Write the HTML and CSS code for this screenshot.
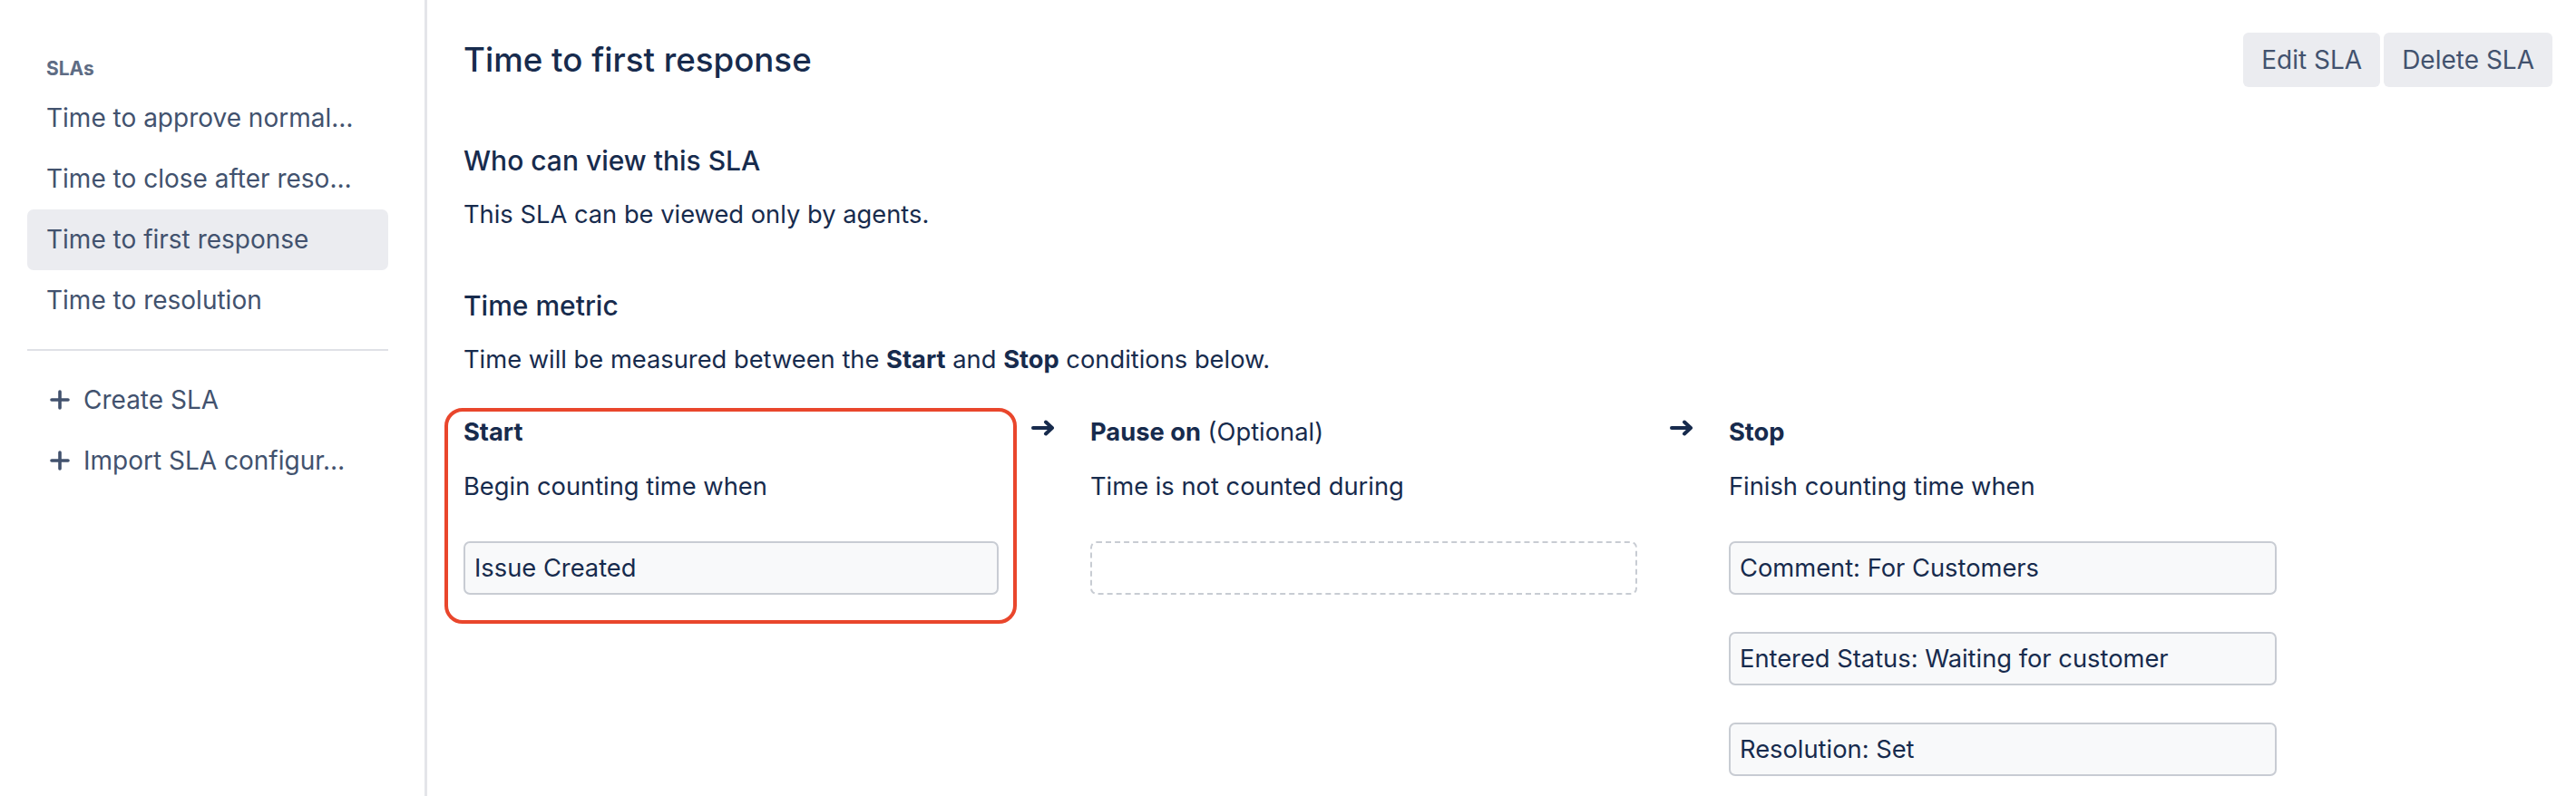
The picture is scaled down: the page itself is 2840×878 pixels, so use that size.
FILE: index.html
```html
<!DOCTYPE html>
<html lang="en">
<head>
<meta charset="utf-8">
<title>Time to first response</title>
<link rel="stylesheet" href="styles.css">
</head>
<body>
<div class="app">
  <aside class="sidebar">
    <div class="sidebar-heading">SLAs</div>
    <ul class="sla-list">
      <li class="sla-item">Time to approve normal…</li>
      <li class="sla-item">Time to close after reso…</li>
      <li class="sla-item is-selected">Time to first response</li>
      <li class="sla-item">Time to resolution</li>
    </ul>
    <div class="divider"></div>
    <ul class="action-list">
      <li class="action-item">
        <svg class="plus" width="24" height="24" viewBox="0 0 24 24" aria-hidden="true"><path d="M12 3v18M3 12h18"/></svg>
        <span>Create SLA</span>
      </li>
      <li class="action-item">
        <svg class="plus" width="24" height="24" viewBox="0 0 24 24" aria-hidden="true"><path d="M12 3v18M3 12h18"/></svg>
        <span>Import SLA configur…</span>
      </li>
    </ul>
  </aside>

  <main class="content">
    <header class="page-header">
      <h1 class="page-title">Time to first response</h1>
      <div class="btn-group">
        <button class="btn">Edit SLA</button>
        <button class="btn">Delete SLA</button>
      </div>
    </header>

    <section class="section section-first">
      <h2 class="section-title">Who can view this SLA</h2>
      <p class="section-text">This SLA can be viewed only by agents.</p>
    </section>

    <section class="section">
      <h2 class="section-title">Time metric</h2>
      <p class="section-text">Time will be measured between the <strong>Start</strong> and <strong>Stop</strong> conditions below.</p>

      <div class="metric-row">
        <div class="condition condition-start is-highlighted">
          <div class="condition-title"><strong>Start</strong></div>
          <div class="condition-desc">Begin counting time when</div>
          <div class="condition-boxes">
            <div class="cond-box">Issue Created</div>
          </div>
        </div>

        <svg class="arrow" width="26" height="18" viewBox="0 0 26 18" aria-hidden="true"><path d="M2 9H23M16 2.5L23 9L16 15.5"/></svg>

        <div class="condition condition-pause">
          <div class="condition-title"><strong>Pause on</strong> (Optional)</div>
          <div class="condition-desc">Time is not counted during</div>
          <div class="condition-boxes">
            <div class="cond-box cond-box-empty"></div>
          </div>
        </div>

        <svg class="arrow" width="26" height="18" viewBox="0 0 26 18" aria-hidden="true"><path d="M2 9H23M16 2.5L23 9L16 15.5"/></svg>

        <div class="condition condition-stop">
          <div class="condition-title"><strong>Stop</strong></div>
          <div class="condition-desc">Finish counting time when</div>
          <div class="condition-boxes">
            <div class="cond-box">Comment: For Customers</div>
            <div class="cond-box">Entered Status: Waiting for customer</div>
            <div class="cond-box">Resolution: Set</div>
          </div>
        </div>
      </div>
    </section>
  </main>
</div>
</body>
</html>
```

FILE: styles.css
```css
* {
  box-sizing: border-box;
}

html, body {
  margin: 0;
  padding: 0;
  background: #ffffff;
}

body {
  font-family: Inter, "Liberation Sans", sans-serif;
  color: #172b4d;
}

.app {
  display: flex;
  min-height: 100vh;
}

/* ---------- Sidebar ---------- */
.sidebar {
  width: 471px;
  flex: 0 0 471px;
  border-right: 3px solid #e4e5e9;
  padding: 64px 40px 0 30px;
}

.sidebar-heading {
  font-size: 21px;
  line-height: 24px;
  font-weight: 700;
  color: #5e6c84;
  padding-left: 21px;
}

.sla-list,
.action-list {
  list-style: none;
  margin: 0;
  padding: 0;
}

.sla-list {
  margin-top: 9px;
}

.sla-item {
  height: 67px;
  line-height: 67px;
  padding: 0 21px;
  font-size: 28px;
  color: #42526e;
  border-radius: 7px;
  white-space: nowrap;
  overflow: hidden;
}

.sla-item.is-selected {
  background: #ebecf0;
}

.divider {
  height: 2px;
  background: #dfe1e6;
  margin-top: 20px;
}

.action-list {
  margin-top: 20px;
}

.action-item {
  display: flex;
  align-items: center;
  gap: 14px;
  height: 67px;
  padding-left: 24px;
  font-size: 28px;
  color: #42526e;
  white-space: nowrap;
}

.plus {
  flex: 0 0 auto;
  fill: none;
  stroke: #42526e;
  stroke-width: 3.6;
  stroke-linecap: round;
}

/* ---------- Main content ---------- */
.content {
  flex: 1 1 auto;
  padding: 36px 26px 0 40px;
}

.page-header {
  display: flex;
  align-items: center;
  justify-content: space-between;
  height: 60px;
}

.page-title {
  margin: 0;
  font-size: 36.7px;
  line-height: 60px;
  font-weight: 500;
  color: #172b4d;
}

.btn-group {
  display: flex;
  gap: 4px;
}

.btn {
  height: 60px;
  padding: 0 20px;
  border: none;
  border-radius: 6px;
  background: #ebecf0;
  color: #42526e;
  font-family: inherit;
  font-size: 28px;
}

.section {
  margin-top: 60px;
}

.section-first {
  margin-top: 61px;
}

.section-title {
  margin: 0;
  font-size: 30px;
  line-height: 40px;
  font-weight: 500;
}

.section-text {
  margin: 20px 0 0;
  font-size: 27.3px;
  line-height: 40px;
}

.section-text strong,
.condition-title strong {
  font-weight: 700;
}

/* ---------- Time metric row ---------- */
.metric-row {
  display: flex;
  align-items: flex-start;
  margin-top: 40px;
}

.condition {
  position: relative;
  font-size: 27.3px;
  line-height: 40px;
}

.condition-start {
  width: 590px;
}

.condition-pause {
  width: 603px;
}

.condition-stop {
  width: 604px;
}

.is-highlighted::before {
  content: "";
  position: absolute;
  top: -7px;
  left: -21px;
  right: -20px;
  bottom: -32px;
  border: 4px solid #e9462c;
  border-radius: 20px;
  pointer-events: none;
}

.arrow {
  flex: 0 0 auto;
  margin: 6px 39px 0 36px;
  fill: none;
  stroke: #172b4d;
  stroke-width: 4;
  stroke-linecap: round;
  stroke-linejoin: round;
}

.condition-desc {
  margin-top: 20px;
}

.condition-boxes {
  display: flex;
  flex-direction: column;
  gap: 41px;
  margin-top: 40px;
}

.cond-box {
  height: 59px;
  padding: 7px 10px;
  line-height: 41px;
  border: 2px solid #c8ccd3;
  border-radius: 7px;
  background: #f8f9fa;
  white-space: nowrap;
}

.cond-box-empty {
  border-style: dashed;
  background: transparent;
}
```
